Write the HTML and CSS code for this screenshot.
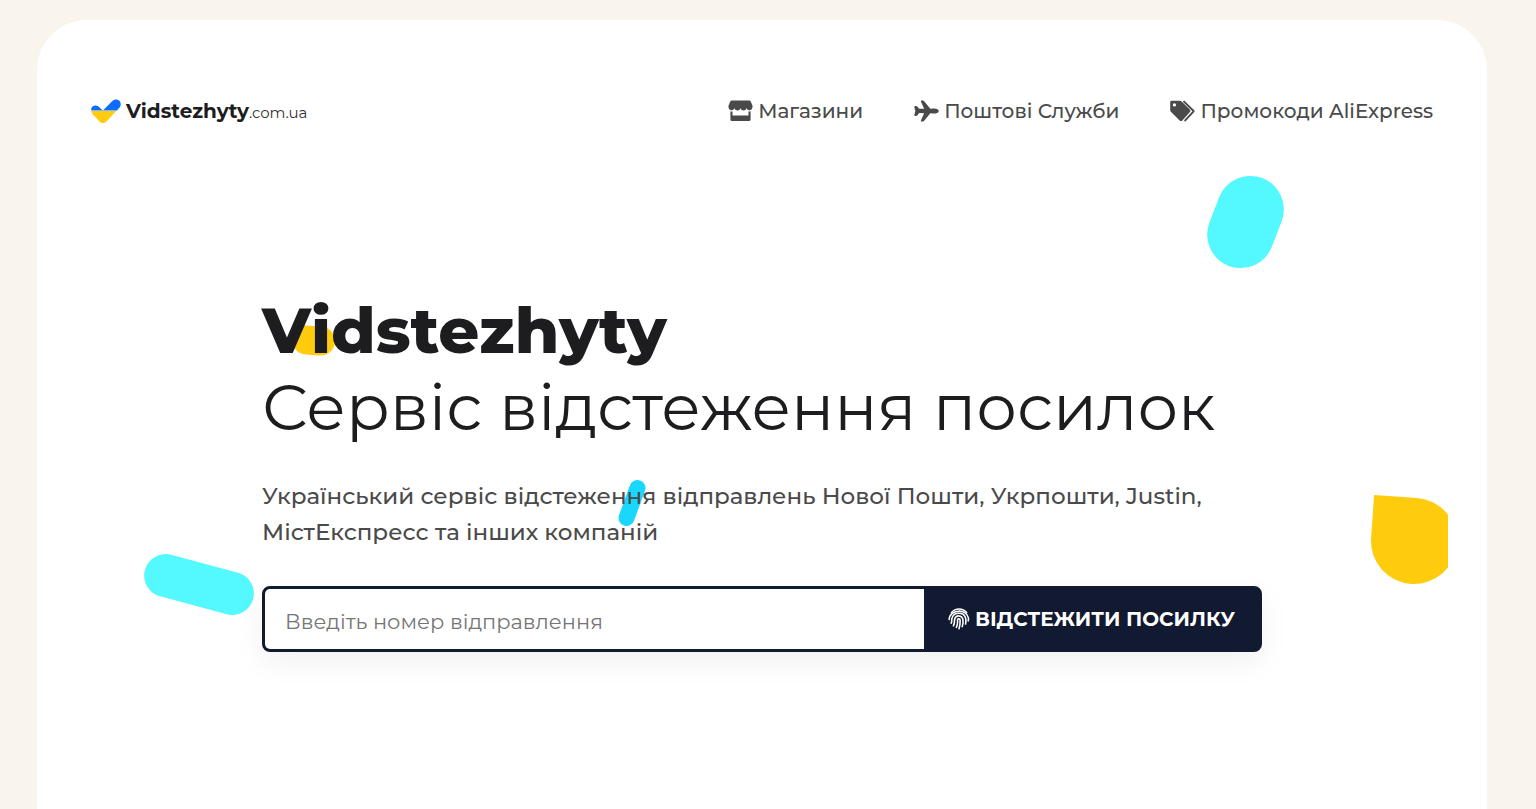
FILE: index.html
```
<!DOCTYPE html>
<html lang="uk">
<head>
    <meta charset="UTF-8">
    <meta name="viewport" content="width=device-width, initial-scale=1.0">
    <title>Vidstezhyty - Сервіс відстеження посилок</title>
    <link rel="stylesheet" href="styles.css">
</head>
<body>
    <div class="page">
        <!-- Decorative shapes -->
        <div class="shapes" aria-hidden="true">
            <span class="shape shape-top"></span>
            <span class="shape shape-title"></span>
            <span class="shape shape-text"></span>
            <span class="shape shape-left"></span>
            <span class="shape shape-right"></span>
        </div>

        <header class="header">
            <a class="logo" href="#">
                <svg class="logo-icon" viewBox="0 0 30 24" aria-hidden="true">
                    <path fill="#0b6cff" d="M.3 11.400C-.4 8.600 2 6.600 4.600 6.600c1.700 0 2.900.8 4 1.900l2.300 2.300c.6.5 1.200.5 1.800 0l8.400-8.600C23.200.2 25.800-.1 27.700 1.300c2.500 1.900 2.700 5.300.7 7.500l-2.500 2.600z"/>
                    <path fill="#ffcb0d" d="M.4 12.100h24.800l-9.800 10.300c-2.100 2.200-5.100 2-7.200-.2L1.700 15.300C.9 14.400.5 13.300.4 12.100z"/>
                </svg>
                <span class="logo-name">Vidstezhyty</span><span class="logo-domain">.com.ua</span>
            </a>
            <nav class="nav">
                <a href="#">
                    <svg viewBox="0 0 26 22" aria-hidden="true">
                        <path d="M4.200 0h17.600c.9 0 1.600.5 2 1.300l1.700 4.200v1.700a3.200 3.200 0 0 1-6.200 1 3.300 3.300 0 0 1-6.300 0 3.300 3.300 0 0 1-6.300 0A3.200 3.200 0 0 1 .5 7.200V5.500l1.700-4.200C2.600.5 3.300 0 4.200 0z"/>
                        <path fill-rule="evenodd" d="M2.500 11.300a5 5 0 0 0 2.200.1v4.200h16.600v-4.200a5 5 0 0 0 2.200-.1v8.500a1.700 1.700 0 0 1-1.700 1.700H4.200a1.700 1.700 0 0 1-1.700-1.700z"/>
                    </svg>
                    Магазини
                </a>
                <a href="#">
                    <svg viewBox="10 40 492 432" aria-hidden="true">
                        <path d="M186.620 464H160a16 16 0 0 1-14.570-22.600l64.460-142.250L113.100 297l-35.300 42.770C71.070 348.230 65.700 352 52 352H34.080a17.660 17.660 0 0 1-14.700-7.060c-2.380-3.210-4.720-8.650-2.440-16.410l19.820-71c.15-.53.33-1.060.53-1.580l-.53-1.740-19.840-71.450c-2.150-7.610.2-12.930 2.560-16.060a16.830 16.830 0 0 1 13.600-6.700H52c10.230 0 20.160 4.590 26 12l34.570 42.050 97.320-1.440-64.440-142A16 16 0 0 1 160 48h26.910a25 25 0 0 1 19.350 9.800l125.050 152 57.770-1.520c4.230-.23 15.950-.31 18.660-.31C463 208 496 225.940 496 256c0 9.460-3.780 27-29.070 38.160-14.930 6.600-34.850 9.940-59.210 9.940-2.680 0-14.370-.08-18.660-.31l-57.760-1.540-125.360 152a25 25 0 0 1-19.320 9.750z"/>
                    </svg>
                    Поштові Служби
                </a>
                <a href="#">
                    <svg viewBox="0 0 26 22" aria-hidden="true">
                        <path fill-rule="evenodd" d="M1.600.3h8.700c.7 0 1.300.3 1.800.7l8.500 8.400c.8.8.8 1.900.1 2.700l-7.900 8.800c-.8.8-2 .8-2.800 0L.9 11.700A2.500 2.500 0 0 1 .2 10V1.700C.2.900.8.300 1.600.3zM4.600 3a1.700 1.700 0 1 0 0 3.400 1.700 1.700 0 0 0 0-3.400z"/>
                        <path fill="none" stroke="currentColor" stroke-width="2" stroke-linecap="round" stroke-linejoin="round" d="M14.600 1.200l9.700 9.500c.3.300.3.600 0 .9l-8.500 9.200"/>
                    </svg>
                    Промокоди AliExpress
                </a>
            </nav>
        </header>

        <main class="hero">
            <h1><b>Vidstezhyty</b><br>Сервіс відстеження посилок</h1>
            <p>Український сервіс відстеження відправлень Нової Пошти, Укрпошти, Justin, МістЕкспресс та інших компаній</p>
            <form class="search">
                <input type="text" name="number" placeholder="Введіть номер відправлення" aria-label="Введіть номер відправлення">
                <button type="submit">
                    <svg viewBox="0 0 22 22" aria-hidden="true">
                        <g fill="none" stroke="currentColor" stroke-width="1.600" stroke-linecap="round">
                            <path d="M3.500 4.600C7.500-.2 14.800-.2 18.600 4.600"/>
                            <path d="M1.200 11.500C1.200 1.200 18.800.2 20.400 9.800c.2 1.400.1 2.300-.2 3"/>
                            <path d="M3.200 15.200c1-2 .2-3.600.8-5.300C6 3.800 15.800 3.400 17.600 10c.6 2.500.4 4.500 0 6"/>
                            <path d="M5.400 17.800c1.800-3.300.6-5.300 1.500-7.400 1.500-3.500 6.900-3.300 7.900.6.700 3 .1 5.600-.6 7.600"/>
                            <path d="M8.400 19.400c1.900-3.900 1-6.100 1.200-7.800.5-1.300 2.300-1.100 2.500.4.300 3.200-.2 6-1.100 8.700"/>
                        </g>
                    </svg>
                    ВІДСТЕЖИТИ ПОСИЛКУ
                </button>
            </form>
        </main>
    </div>
</body>
</html>
```
FILE: styles.css
```
* {
    box-sizing: border-box;
}
body {
    margin: 0;
    padding: 20px 49px 0 37px;
    background-color: #f9f4ec;
    color: #1d1d1f;
    font-family: Montserrat, Inter, sans-serif;
}
a {
    color: inherit;
    text-decoration: none;
}
.page {
    position: relative;
    min-height: calc(100vh - 20px);
    padding: 71px 54px;
    background-color: #fff;
    border-radius: 50px 50px 0 0;
}

/* header */
.header {
    position: relative;
    display: flex;
    align-items: center;
    justify-content: space-between;
    height: 40px;
}
.logo {
    display: flex;
    align-items: baseline;
}
.logo-icon {
    width: 30px;
    height: 24px;
    margin-right: 5px;
    align-self: center;
}
.logo-name {
    font-size: 20px;
    font-weight: 700;
}
.logo-domain {
    font-size: 15px;
    color: #333;
}
.nav {
    display: flex;
    gap: 51px;
    font-size: 20px;
    font-weight: 500;
    color: #4a4a4a;
}
.nav a {
    display: flex;
    align-items: center;
    gap: 5px;
}
.nav svg {
    width: 25px;
    height: 22px;
    fill: currentColor;
}

/* hero */
.hero {
    position: relative;
    max-width: 1000px;
    margin: 161px auto 0;
}
h1 {
    margin: 0;
    font-size: 64px;
    font-weight: 400;
    line-height: 77px;
}
h1 b {
    font-weight: 800;
}
.hero p {
    margin: 32px 0 36px;
    font-size: 23px;
    font-weight: 500;
    line-height: 36px;
    color: #4a4a4a;
}
.search {
    display: flex;
    height: 66px;
    border: 3px solid #111a30;
    border-radius: 8px;
    background-color: #111a30;
    box-shadow: 0 10px 30px rgba(0, 0, 0, 0.06);
}
.search input {
    flex: 1;
    min-width: 0;
    padding: 4px 20px 0;
    border: 0;
    border-radius: 5px 0 0 5px;
    background-color: #fff;
    font: inherit;
    font-size: 21px;
}
.search input::placeholder {
    color: #757575;
}
.search button {
    display: flex;
    align-items: center;
    justify-content: center;
    gap: 5px;
    width: 335px;
    padding: 0;
    border: 0;
    background: none;
    color: #fff;
    font: inherit;
    font-size: 20px;
    font-weight: 700;
    cursor: pointer;
}
.search svg {
    width: 22px;
    height: 22px;
}

/* shapes */
.shapes {
    position: absolute;
    inset: 0 39px 0 0;
    overflow: hidden;
}
.shape {
    position: absolute;
}
.shape-top {
    top: 155px;
    right: 169px;
    width: 67px;
    height: 94px;
    border-radius: 34px;
    background-color: #54f8ff;
    transform: rotate(21deg);
}
.shape-title {
    top: 306px;
    left: 255px;
    width: 43px;
    height: 29px;
    border-radius: 10px 15px 15px 15px;
    background-color: #ffcb0d;
    transform: rotate(4deg);
}
.shape-text {
    top: 459px;
    left: 587px;
    width: 16px;
    height: 48px;
    border-radius: 8px;
    background-color: #19d7ff;
    transform: rotate(20deg);
}
.shape-left {
    top: 543px;
    left: 106px;
    width: 112px;
    height: 43px;
    border-radius: 22px;
    background-color: #54f8ff;
    transform: rotate(15deg);
}
.shape-right {
    top: 478px;
    right: -9px;
    width: 86px;
    height: 86px;
    border-radius: 0 43px 43px 43px;
    background-color: #ffcb0d;
    transform: rotate(4deg);
}
```
